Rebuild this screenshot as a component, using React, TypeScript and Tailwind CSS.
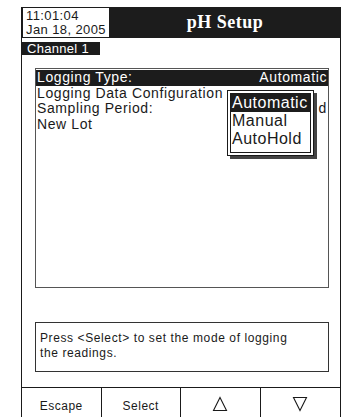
const options = ["Automatic", "Manual", "AutoHold"];

const Triangle = ({ down }: { down?: boolean }) => (
  <svg width="16" height="16" viewBox="0 0 16 16" className="block">
    <polygon
      points={down ? "1.5,1.5 14.5,1.5 8,14.5" : "8,1.5 14.5,14.5 1.5,14.5"}
      fill="none"
      stroke="#1a1a1a"
      strokeWidth="1.1"
    />
  </svg>
);

const App = () => {
  return (
    <div className="w-[344px] h-[417px] bg-white pt-[7px] pl-[21px] overflow-hidden font-['Liberation_Sans',Arial,sans-serif] text-[#1a1a1a]">
      <div className="w-[320px] h-[410px] border-x border-[#1a1a1a] flex flex-col">
        {/* header */}
        <div className="h-[31px] bg-[#1c1c1c] flex shrink-0">
          <div className="w-[88px] bg-white border border-[#1c1c1c] px-[3px] pt-[1px] text-[13px] leading-[14px] tracking-[0.4px]">
            <div>11:01:04</div>
            <div>Jan 18, 2005</div>
          </div>
          <div className="flex-1 flex items-center justify-center text-white font-['Liberation_Serif',serif] font-bold text-[18px] tracking-[0.5px] pb-[1px]">
            pH Setup
          </div>
        </div>

        <div className="mt-[4px] w-[78px] h-[13px] bg-[#1c1c1c] text-white text-[13px] leading-[13px] pl-[5px] tracking-[0.3px]">
          Channel 1
        </div>

        {/* list */}
        <div className="relative mt-[13px] ml-[13px] mr-[11px] h-[220px] border border-[#555] pt-[1px] text-[14px] leading-[15px] tracking-[0.6px] whitespace-nowrap">
          <div className="h-[15.5px] flex items-center justify-between px-[1px] bg-[#1c1c1c] text-white">
            <span>Logging Type:</span>
            <span>Automatic</span>
          </div>
          <div className="h-[15.5px] flex items-center px-[1px]">
            <span className="w-[190px] overflow-hidden">Logging Data Configuration</span>
          </div>
          <div className="h-[15.5px] flex items-center justify-between px-[1px]">
            <span>Sampling Period:</span>
            <span className="w-[9px] overflow-hidden flex justify-end">Timed</span>
          </div>
          <div className="h-[15.5px] flex items-center px-[1px]">
            <span>New Lot</span>
          </div>

          <div className="absolute left-[191px] top-[21px] w-[87px] bg-white border border-[#1a1a1a] p-[2px] shadow-[3px_3px_0_#444]">
            <div className="border border-[#1a1a1a] pb-[4px]">
              {options.map((o, i) => (
                <div
                  key={o}
                  className={`h-[18px] flex items-center pl-[1px] text-[16px] leading-[18px] tracking-[0.5px] ${
                    i === 0 ? "bg-[#1c1c1c] text-white" : ""
                  }`}
                >
                  {o}
                </div>
              ))}
            </div>
          </div>
        </div>

        {/* help */}
        <div className="mt-[34px] ml-[13px] mr-[11px] h-[50px] border border-[#333] px-[4px] pt-[8px] text-[12px] leading-[15px] tracking-[0.6px]">
          Press &lt;Select&gt; to set the mode of logging
          <br />
          the readings.
        </div>

        <div className="flex-1" />

        {/* soft keys */}
        <div className="h-[30px] border-t border-[#1a1a1a] grid grid-cols-4 shrink-0 text-[12px] tracking-[0.5px]">
          <div className="flex items-center justify-center pt-[6px] border-r border-[#1a1a1a]">Escape</div>
          <div className="flex items-center justify-center pt-[6px] border-r border-[#1a1a1a]">Select</div>
          <div className="flex items-center justify-center pt-[2px] border-r border-[#1a1a1a]">
            <Triangle />
          </div>
          <div className="flex items-center justify-center pt-[2px]">
            <Triangle down />
          </div>
        </div>
      </div>
    </div>
  );
};

export default App;
